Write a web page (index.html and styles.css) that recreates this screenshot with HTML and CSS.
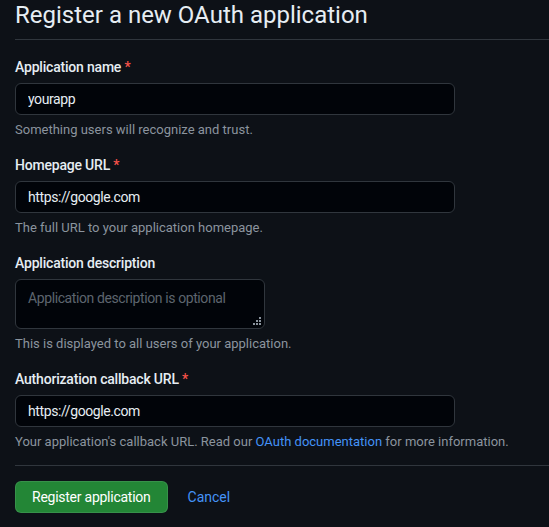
FILE: index.html
```html
<!DOCTYPE html>
<html lang="en">
<head>
<meta charset="utf-8">
<title>Register a new OAuth application</title>
<link rel="stylesheet" href="styles.css">
</head>
<body>
<div class="page">
  <h1 class="subhead">Register a new OAuth application</h1>
  <form class="form">
    <div class="group">
      <label class="label">Application name <span class="req">*</span></label>
      <input class="input" type="text" value="yourapp">
      <p class="note">Something users will recognize and trust.</p>
    </div>
    <div class="group">
      <label class="label">Homepage URL <span class="req">*</span></label>
      <input class="input" type="text" value="https://google.com">
      <p class="note">The full URL to your application homepage.</p>
    </div>
    <div class="group">
      <label class="label">Application description</label>
      <div class="ta-wrap">
        <textarea class="textarea" placeholder="Application description is optional"></textarea>
        <svg class="grip" width="8" height="8" viewBox="0 0 8 8"><rect x="6" y="0" width="2" height="2"/><rect x="3" y="3" width="2" height="2"/><rect x="6" y="3" width="2" height="2"/><rect x="0" y="6" width="2" height="2"/><rect x="3" y="6" width="2" height="2"/><rect x="6" y="6" width="2" height="2"/></svg>
      </div>
      <p class="note">This is displayed to all users of your application.</p>
    </div>
    <div class="group">
      <label class="label">Authorization callback URL <span class="req">*</span></label>
      <input class="input" type="text" value="https://google.com">
      <p class="note">Your application's callback URL. Read our <a class="link" href="#">OAuth documentation</a> for more information.</p>
    </div>
    <div class="actions">
      <button class="btn" type="button">Register application</button>
      <a class="cancel" href="#">Cancel</a>
    </div>
  </form>
</div>
</body>
</html>
```
FILE: styles.css
```css
* { box-sizing: border-box; }
html, body {
  margin: 0;
  background: #0d1117;
  color: #e6edf3;
  font-family: Roboto, "Noto Sans", sans-serif;
}
.page {
  padding-left: 15px;
  overflow: hidden;
  height: 527px;
}
.subhead {
  margin: 0;
  font-size: 24px;
  font-weight: 400;
  line-height: 30px;
  padding-bottom: 9px;
  border-bottom: 1px solid #30363d;
  color: #e6edf3;
}
.form {
  display: flex;
  flex-direction: column;
  gap: 16px;
  padding-top: 17px;
}
.group {
  display: flex;
  flex-direction: column;
  align-items: flex-start;
}
.label {
  font-size: 14px;
  font-weight: 500;
  line-height: 20px;
  letter-spacing: -0.2px;
  margin-bottom: 6px;
}
.req { color: #f85149; }
.input, .textarea {
  width: 440px;
  height: 32px;
  padding: 0 12px;
  background: #010409;
  border: 1px solid #30363d;
  border-radius: 6px;
  color: #e6edf3;
  font-family: inherit;
  font-size: 14px;
  letter-spacing: -0.4px;
  outline: none;
}
.ta-wrap {
  position: relative;
  width: 250px;
  height: 50px;
}
.textarea {
  width: 250px;
  height: 50px;
  padding: 8px 12px;
  resize: none;
  line-height: 20px;
  display: block;
}
.textarea::placeholder { color: #5d656e; }
.grip {
  position: absolute;
  right: 4px;
  bottom: 4px;
  fill: #8b949e;
}
.note {
  margin: 6px 0 0 0;
  font-size: 13px;
  line-height: 18px;
  color: #8b949e;
}
.link, .cancel {
  color: #4493f8;
  text-decoration: none;
}
.actions {
  margin-top: -2px;
  border-top: 1px solid #30363d;
  padding-top: 15px;
  display: flex;
  align-items: center;
  gap: 20px;
}
.btn {
  height: 32px;
  padding: 0 16px;
  background: #238636;
  color: #ffffff;
  border: 1px solid rgba(240,246,252,0.1);
  border-radius: 6px;
  font-family: inherit;
  font-size: 14px;
  font-weight: 400;
  letter-spacing: -0.25px;
}
.cancel { font-size: 14px; }
```
